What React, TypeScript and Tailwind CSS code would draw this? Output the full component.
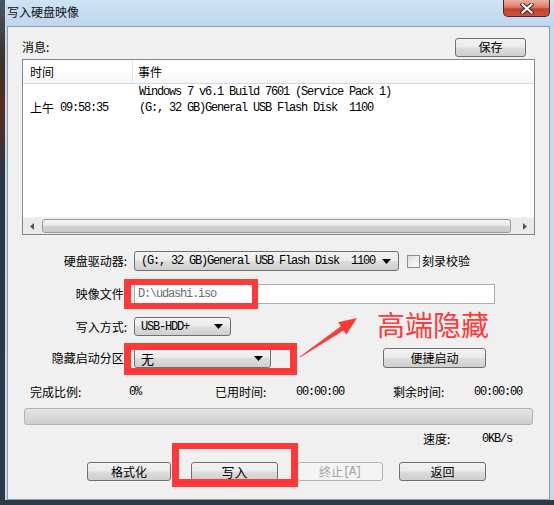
import React from 'react';

const mono = "font-['Liberation_Mono','Noto_Sans_CJK_SC',monospace] text-[12px] tracking-[-1.2px]";
const btnFace =
    'border border-[#707070] rounded-[3px] bg-[linear-gradient(#f3f3f3_0%,#ebebeb_48%,#dddddd_52%,#cfcfcf_100%)]';

function Btn({ children, className = '', disabled = false }: { children: React.ReactNode; className?: string; disabled?: boolean }) {
    return (
        <div
            className={`flex items-center justify-center leading-none ${
                disabled
                    ? 'border border-[#adb2b5] rounded-[3px] bg-[#f4f4f4] text-[#a3a3a3]'
                    : btnFace
            } ${className}`}
        >
            {children}
        </div>
    );
}

function Combo({ children, className = '' }: { children: React.ReactNode; className?: string }) {
    return (
        <div className={`flex items-center pl-[6px] pr-[7px] ${btnFace} ${className}`}>
            <div className="flex-1 leading-none whitespace-pre">{children}</div>
            <svg width="9" height="5" viewBox="0 0 9 5">
                <path d="M0 0H9L4.5 5Z" fill="#000" />
            </svg>
        </div>
    );
}

function RedBox({ className }: { className: string }) {
    return <div className={`absolute border-[#ff3838] pointer-events-none ${className}`} />;
}

export default function App() {
    return (
        <div className="relative w-[554px] h-[505px] overflow-hidden flex bg-[#2c3a48] font-['Noto_Sans_CJK_SC','Noto_Sans',sans-serif] text-[12px] text-black">
            {/* desktop edge */}
            <div className="w-[5px] h-full bg-[linear-gradient(#4a5664_0%,#3b3326_12%,#5a2a20_22%,#2a3644_35%,#2c3a48_100%)]" />

            <div className="w-[549px] flex flex-col">
                {/* title bar */}
                <div className="h-[26px] flex bg-[linear-gradient(180deg,#cfe3f6,#bed6ee)]">
                    <div className="pl-[2px] pt-[4px] leading-[16px] text-[12px] text-[#111]">写入硬盘映像</div>
                    <div className="ml-auto mr-[4px] w-[47px] h-[17px] flex items-center justify-center rounded-b-[5px] border border-t-0 border-[#5e2018] bg-[linear-gradient(#eab0a2_0%,#dc7a66_45%,#c8432b_55%,#c9533a_100%)]">
                        <svg width="14" height="11" viewBox="0 0 14 11">
                            <path d="M2.5 1.5L11.5 9.5M11.5 1.5L2.5 9.5" stroke="#3b2a28" strokeWidth="4.2" strokeLinecap="square" />
                            <path d="M2.5 1.5L11.5 9.5M11.5 1.5L2.5 9.5" stroke="#ffffff" strokeWidth="2.2" strokeLinecap="square" />
                        </svg>
                    </div>
                </div>

                <div className="flex h-[474px]">
                    <div className="w-[2px] bg-[#c4d9ee]" />

                    {/* client area */}
                    <div className="w-[543px] border border-[#8e9bab] bg-[#f0f0f0] flex flex-col">
                        {/* messages header */}
                        <div className="mt-[11px] h-[18px] flex items-center pl-[14px] pr-[23px]">
                            <span className="leading-none">消息:</span>
                            <Btn className="ml-auto w-[71px] h-[19px]">保存</Btn>
                        </div>

                        {/* log list */}
                        <div className="mt-[3px] ml-[14px] w-[513px] h-[176px] border border-[#828790] bg-white flex flex-col">
                            <div className="h-[24px] flex border-b border-[#d6d8db] bg-[linear-gradient(#ffffff_0%,#ffffff_50%,#f4f5f7_100%)]">
                                <div className="w-[110px] border-r border-[#e3e4e6] pl-[7px] flex items-center">时间</div>
                                <div className="pl-[5px] flex items-center">事件</div>
                            </div>
                            <div className="flex-1 flex">
                                <div className="w-[111px] pl-[7px] pt-[16px] leading-[16px] whitespace-nowrap flex">
                                    <span>上午</span>
                                    <span className={`ml-[6px] ${mono}`}>09:58:35</span>
                                </div>
                                <div className={`pl-[5px] ${mono} leading-[16px] whitespace-pre`}>
                                    <div>Windows 7 v6.1 Build 7601 (Service Pack 1)</div>
                                    <div>(G:, 32 GB)General USB Flash Disk  1100</div>
                                </div>
                            </div>
                            {/* horizontal scrollbar */}
                            <div className="h-[17px] flex bg-[#eaeaea] border-t border-[#f4f4f4]">
                                <div className="w-[18px] flex items-center justify-center">
                                    <svg width="4" height="7" viewBox="0 0 4 7">
                                        <path d="M4 0V7L0 3.5Z" fill="#555" />
                                    </svg>
                                </div>
                                <div className="ml-[1px] w-[469px] my-[1px] rounded-[3px] border border-[#9a9a9a] bg-[linear-gradient(#f4f4f4_0%,#e6e6e6_50%,#d3d3d3_51%,#c9c9c9_100%)]" />
                                <div className="flex-1" />
                                <div className="w-[18px] flex items-center justify-center">
                                    <svg width="4" height="7" viewBox="0 0 4 7">
                                        <path d="M0 0V7L4 3.5Z" fill="#555" />
                                    </svg>
                                </div>
                            </div>
                        </div>

                        {/* drive */}
                        <div className="mt-[16px] h-[20px] flex items-center">
                            <span className="w-[119px] text-right leading-none">硬盘驱动器:</span>
                            <Combo className={`ml-[7px] w-[265px] h-[20px] ${mono}`}>
                                {'(G:, 32 GB)General USB Flash Disk  1100'}
                            </Combo>
                            <div className="ml-[8px] w-[13px] h-[13px] border border-[#8f8f8f] bg-[linear-gradient(135deg,#dcdcdc,#ffffff)]" />
                            <span className="ml-[2px] leading-none">刻录校验</span>
                        </div>

                        {/* image file */}
                        <div className="mt-[13px] h-[20px] flex items-center">
                            <span className="w-[119px] text-right leading-none">映像文件:</span>
                            <div className={`ml-[7px] w-[361px] h-[20px] border border-[#abadb3] bg-white flex items-center pl-[3px] ${mono} text-[#6d6d6d]`}>
                                D:\udashi.iso
                            </div>
                        </div>

                        {/* write mode */}
                        <div className="mt-[13px] h-[19px] flex items-center">
                            <span className="w-[119px] text-right leading-none">写入方式:</span>
                            <Combo className={`ml-[7px] w-[97px] h-[19px] ${mono}`}>USB-HDD+</Combo>
                        </div>

                        {/* hidden partition */}
                        <div className="mt-[12px] h-[20px] flex items-center">
                            <span className="w-[119px] text-right leading-none">隐藏启动分区:</span>
                            <Combo className="ml-[7px] w-[137px] h-[20px] text-[13px]">无</Combo>
                            <Btn className="ml-[112px] w-[103px] h-[20px]">便捷启动</Btn>
                        </div>

                        {/* progress info */}
                        <div className="mt-[17px] h-[14px] flex items-center pl-[22px] whitespace-nowrap">
                            <span className="w-[99px] leading-none">完成比例:</span>
                            <span className={`w-[86px] ${mono}`}>0%</span>
                            <span className="w-[81px] leading-none">已用时间:</span>
                            <span className={`w-[97px] ${mono}`}>00:00:00</span>
                            <span className="w-[81px] leading-none">剩余时间:</span>
                            <span className={mono}>00:00:00</span>
                        </div>

                        <div className="mt-[9px] ml-[16px] w-[509px] h-[17px] rounded-[3px] border border-[#b2b2b2] bg-[linear-gradient(#e4e4e4_0%,#dadada_50%,#cdcdcd_100%)]" />

                        <div className="mt-[7px] h-[14px] flex items-center pl-[415px]">
                            <span className="w-[59px] leading-none">速度:</span>
                            <span className={mono}>0KB/s</span>
                        </div>

                        {/* action buttons */}
                        <div className="mt-[16px] h-[19px] flex pl-[79px]">
                            <Btn className="w-[84px] h-[19px]">格式化</Btn>
                            <Btn className="ml-[20px] w-[87px] h-[19px] text-[13px]">写入</Btn>
                            <Btn disabled className="ml-[19px] w-[86px] h-[19px]">
                                终止<span className={mono}>[A]</span>
                            </Btn>
                            <Btn className="ml-[16px] w-[87px] h-[19px]">返回</Btn>
                        </div>
                    </div>

                    <div className="w-[4px] bg-[#c4d9ee]" />
                </div>

                <div className="flex-1 bg-[#2c3a48]" />
            </div>

            {/* annotations drawn over the dialog */}
            <RedBox className="left-[124px] top-[279px] w-[134px] h-[30px] border-[6px] border-l-[7px]" />
            <RedBox className="left-[124px] top-[343px] w-[173px] h-[32px] border-[7px]" />
            <RedBox className="left-[172px] top-[443px] w-[126px] h-[44px] border-[7px] border-t-[6px] border-b-[8px]" />

            <svg className="absolute left-0 top-0 pointer-events-none" width="554" height="505" viewBox="0 0 554 505">
                <polygon
                    points="300,357.6 343.5,330.6 346.4,334.6 357,318 338.1,322.2 340.9,326.2 300,356.4"
                    fill="#ff3838"
                />
            </svg>

            <div className="absolute left-[377px] top-[308px] text-[28px] leading-[32px] text-[#ff3838] whitespace-nowrap">
                高端隐藏
            </div>
        </div>
    );
}
